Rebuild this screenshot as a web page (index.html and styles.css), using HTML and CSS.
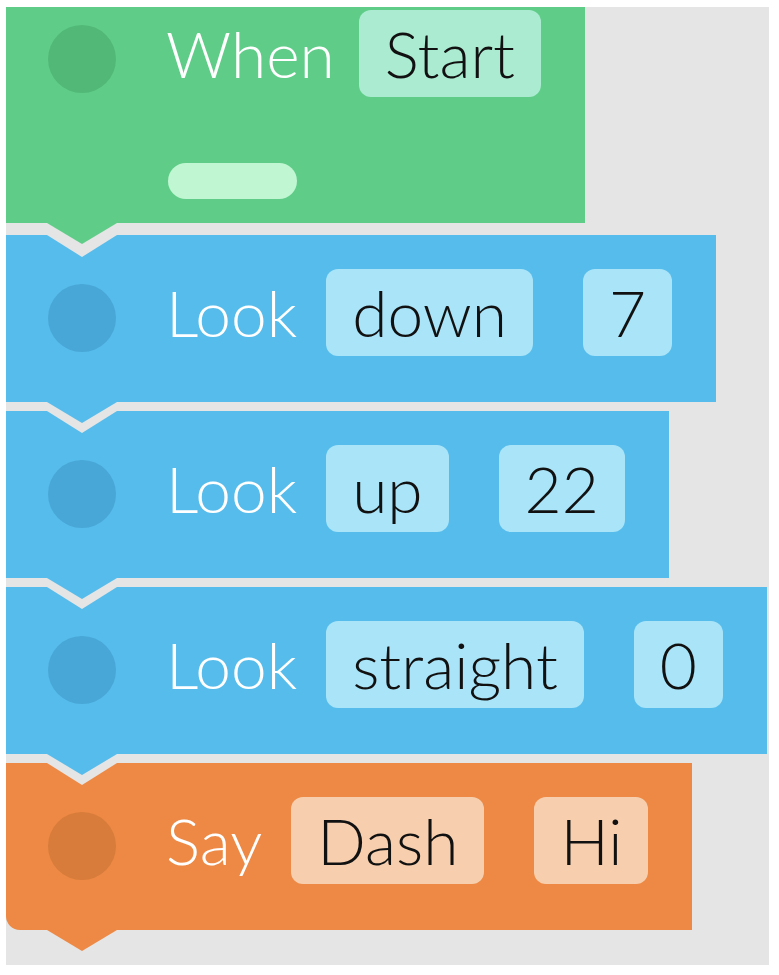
FILE: index.html
```html
<!DOCTYPE html>
<html lang="en">
<head>
    <meta charset="UTF-8">
    <meta name="viewport" content="width=device-width, initial-scale=1.0">
    <title>Blocks</title>
    <link rel="stylesheet" href="styles.css">
</head>
<body>
    <div class="workspace">
        <!-- evento de inicio -->
        <div class="block event">
            <div class="row">
                <span class="dot"></span>
                <span class="label">When</span>
                <span class="field">Start</span>
            </div>
            <div class="slot"></div>
        </div>

        <div class="block look">
            <div class="row">
                <span class="dot"></span>
                <span class="label">Look</span>
                <span class="field">down</span>
                <span class="field">7</span>
            </div>
        </div>

        <div class="block look">
            <div class="row">
                <span class="dot"></span>
                <span class="label">Look</span>
                <span class="field">up</span>
                <span class="field">22</span>
            </div>
        </div>

        <div class="block look">
            <div class="row">
                <span class="dot"></span>
                <span class="label">Look</span>
                <span class="field">straight</span>
                <span class="field">0</span>
            </div>
        </div>

        <div class="block say last">
            <div class="row">
                <span class="dot"></span>
                <span class="label">Say</span>
                <span class="field">Dash</span>
                <span class="field">Hi</span>
            </div>
        </div>
    </div>
</body>
</html>
```

FILE: styles.css
```css
body {
    margin: 0;
    background: #fff;
    font-family: Lato, "Open Sans", sans-serif;
}

.workspace {
    margin: 7px 10px 10px 6px;
    height: 958px;
    background: #e5e5e5;
    overflow: hidden;
    display: flex;
    flex-direction: column;
    align-items: flex-start;
}

.block {
    position: relative;
    display: flex;
    flex-direction: column;
    padding: 34px 44px 46px 42px;
    margin-top: 9px;
}

/* muesca de arriba */
.block::before {
    content: "";
    position: absolute;
    top: 0;
    left: 41px;
    width: 70px;
    height: 22px;
    background: #e5e5e5;
    clip-path: polygon(0 0, 100% 0, 50% 100%);
    z-index: 1;
}

/* pestaña de abajo */
.block::after {
    content: "";
    position: absolute;
    bottom: -21px;
    left: 41px;
    width: 70px;
    height: 21px;
    background: inherit;
    clip-path: polygon(0 0, 100% 0, 50% 100%);
    z-index: 2;
}

.row {
    display: flex;
    align-items: center;
}

.dot {
    width: 68px;
    height: 68px;
    border-radius: 50%;
    margin: 11px 50px 0 0;
}

.label {
    color: #fff;
    font-size: 64px;
    font-weight: 300;
    line-height: 1;
    margin-right: 29px;
}

.field {
    height: 87px;
    display: flex;
    align-items: center;
    padding: 0 26px;
    border-radius: 12px;
    color: #111;
    font-size: 64px;
    font-weight: 300;
    line-height: 1;
}

.field + .field {
    margin-left: 50px;
}

.event {
    margin-top: 0;
    padding: 3px 44px 24px 42px;
    background: #5fcd88;
}

.event::before {
    display: none;
}

.event .label {
    margin-right: 24px;
}

.event .dot { background: #52b877; }
.event .field { background: #abebd1; }

.slot {
    width: 129px;
    height: 36px;
    margin: 66px 0 0 120px;
    border-radius: 18px;
    background: #c1f6d3;
}

.event + .block {
    margin-top: 12px;
}

.look { background: #56bceb; }
.look .dot { background: #48a7d6; }
.look .field { background: #a9e4f8; }

.say { background: #ed8944; }
.say .dot { background: #d77c3b; }
.say .field { background: #f7cfae; }

.last {
    border-bottom-left-radius: 14px;
}
```
